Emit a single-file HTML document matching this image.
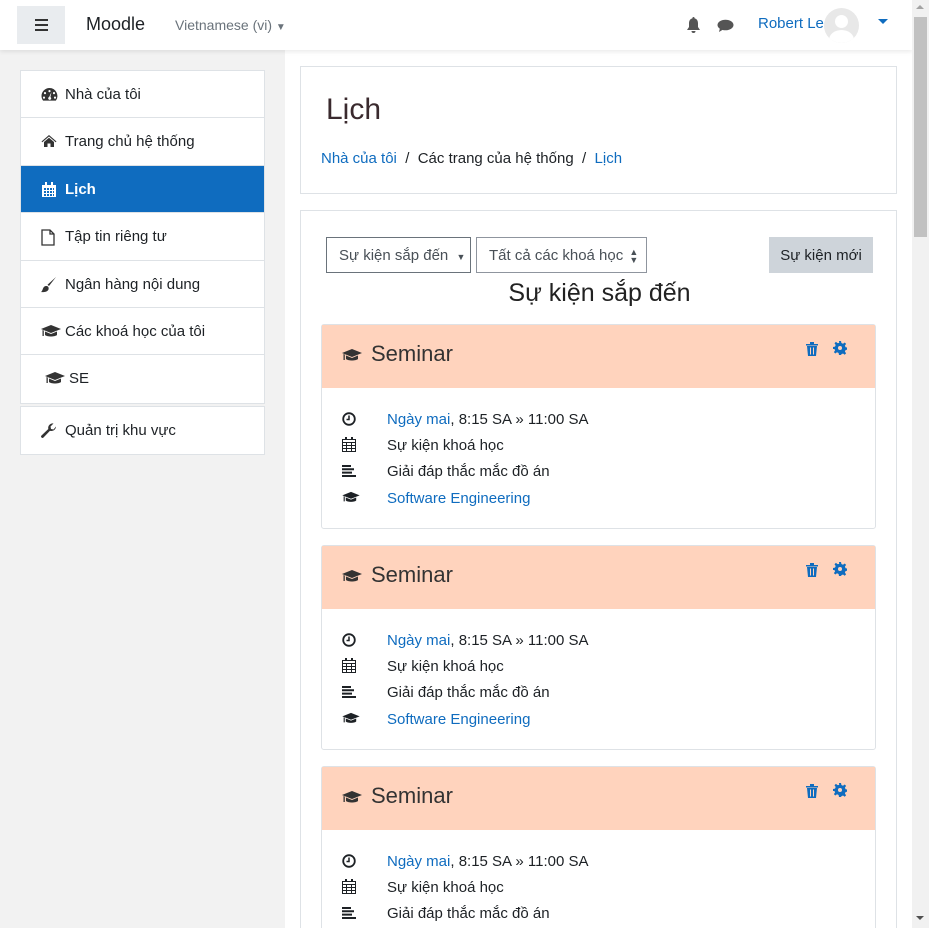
<!DOCTYPE html>
<html style="overflow:hidden;height:928px"><head><meta charset="utf-8"><style>
*{box-sizing:border-box;margin:0;padding:0}
html,body{overflow:hidden}
body{width:929px;height:928px;background:#f2f2f2;font-family:"Liberation Sans",sans-serif;font-size:15px;color:#1d2125;position:relative}
#wrap{position:absolute;left:0;top:0;width:929px;height:928px;overflow:hidden}
a{color:#0f6cbf;text-decoration:none}
.nav{position:absolute;left:0;top:0;width:912px;height:50px;background:#fff;box-shadow:0 2px 4px rgba(0,0,0,.08);z-index:2}
.burger{position:absolute;left:17px;top:6px;width:48px;height:38px;background:#e9ecef}
.burger i{position:absolute;left:18px;width:13px;height:2px;background:#333}
.abs{position:absolute}
.side{position:absolute;left:20px;width:245px;background:#fff;border:1px solid #dee2e6}
.side div{height:47.4px;border-bottom:1px solid #dee2e6;position:relative;line-height:48px;padding-left:44px;color:#1d2125}
.side div:last-child{border-bottom:none}
.side div.act{background:#0f6cbf;color:#fff;font-weight:bold}
.side svg{position:absolute;left:20px;top:16px}
.main{position:absolute;left:285px;top:50px;width:627px;height:878px;background:#fff}
.card{position:absolute;background:#fff;border:1px solid #dee2e6}
.ev{position:absolute;left:321px;width:555px;height:205px;border:1px solid #dee2e6;border-radius:3px;background:#fff}
.ev .hd{height:63px;background:#ffd3bd;position:relative}
.ev .hd span{position:absolute;left:49px;top:16px;font-size:22px;font-weight:300;color:#333}
.row{position:absolute;left:65px;font-size:15px}
.ic{position:absolute;left:20px}
.sb{position:absolute;left:912px;top:0;width:17px;height:928px;background:#f1f1f1;z-index:5}
</style></head><body><div id="wrap">
<div class="nav">
 <div class="burger"><i style="top:13px"></i><i style="top:18px"></i><i style="top:23px"></i></div>
 <div class="abs" style="left:86px;top:14px;font-size:18px;color:#1d2125">Moodle</div>
 <div class="abs" style="left:175px;top:17px;font-size:14px;color:#6a737b">Vietnamese (vi) <span style="font-size:10px">▼</span></div>
 <svg class="abs" style="left:686px;top:17px" width="15" height="16" viewBox="0 0 15 16"><path d="M7.5 0a1 1 0 0 1 1 1.3C11 2 12 4 12 6.5V10l2 3H1l2-3V6.5C3 4 4 2 6.5 1.3A1 1 0 0 1 7.5 0zM5.5 14h4a2 2 0 0 1-4 0z" fill="#555"/></svg>
 <svg class="abs" style="left:717px;top:19px" width="17" height="14" viewBox="0 0 17 14"><ellipse cx="8.5" cy="6" rx="8" ry="5.3" fill="#555"/><path d="M3 9l-1 4 5-3z" fill="#555"/></svg>
 <a class="abs" style="left:758px;top:15px;font-size:15px">Robert Le</a>
 <div class="abs" style="left:824px;top:8px;width:35px;height:35px;border-radius:50%;background:#e8e8e8;overflow:hidden"><div class="abs" style="left:11px;top:7px;width:13px;height:13px;border-radius:50%;background:#fff"></div><div class="abs" style="left:5px;top:22px;width:25px;height:20px;border-radius:50%;background:#fff"></div></div>
 <div class="abs" style="left:878px;top:19px;width:0;height:0;border-left:5px solid transparent;border-right:5px solid transparent;border-top:5px solid #0f6cbf"></div>
</div>

<div class="side" style="top:70px">
 <div><svg width="17" height="14" viewBox="0 0 17 14"><path d="M8.5 1a8 8 0 0 0-8 8c0 1.8.6 3.4 1.6 4.6h12.8A8 8 0 0 0 8.5 1zm0 2a1.1 1.1 0 1 1 0 2.2 1.1 1.1 0 0 1 0-2.2zM4 5a1.1 1.1 0 1 1 0 2.2A1.1 1.1 0 0 1 4 5zm9 0a1.1 1.1 0 1 1 0 2.2A1.1 1.1 0 0 1 13 5zM3 9.5a1.1 1.1 0 1 1 0 2.2 1.1 1.1 0 0 1 0-2.2zm11 0a1.1 1.1 0 1 1 0 2.2 1.1 1.1 0 0 1 0-2.2zM10.5 5L9.4 10a1.5 1.5 0 1 1-1.2-.1z" fill="#333"/></svg>Nhà của tôi</div>
 <div><svg width="16" height="14" viewBox="0 0 16 14"><path d="M8 1l7.5 6.5-.8.8L8 2.5 1.3 8.3l-.8-.8zM3 8l5-4.3L13 8v5H9.5V9.5h-3V13H3z" fill="#333"/></svg>Trang chủ hệ thống</div>
 <div class="act"><svg width="16" height="16" viewBox="0 0 16 16"><path d="M1 3h14v12H1z" fill="#fff"/><path d="M3 6h2v2H3zm3 0h2v2H6zm3 0h2v2H9zm3 0h1v2h-1zM3 9h2v2H3zm3 0h2v2H6zm3 0h2v2H9zm3 0h1v2h-1zM3 12h2v2H3zm3 0h2v2H6zm3 0h2v2H9zm3 0h1v2h-1z" fill="#0f6cbf"/><path d="M4 0h2v4H4zm6 0h2v4h-2z" fill="#fff"/></svg>Lịch</div>
 <div><svg width="14" height="17" viewBox="0 0 14 17"><path d="M1 1h8l4 4v11H1z M9 1v4h4" fill="none" stroke="#333" stroke-width="1.3"/></svg>Tập tin riêng tư</div>
 <div><svg width="16" height="16" viewBox="0 0 16 16"><path d="M15 0L8 9l-1.5-1.2zM5.5 9c2 0 2.5 2 2 3.5C6.5 15 2 15.5 0 15c1.5-1 1.5-3 2.5-4.5S4.5 9 5.5 9z" fill="#333"/></svg>Ngân hàng nội dung</div>
 <div><svg width="20" height="15" viewBox="0 0 20 15"><path d="M10 1L0 5l10 4 10-4zM4 7.5v3.5c2 2 10 2 12 0V7.5l-6 2.5zM1.5 6v6h1.3V6.5z" fill="#333"/></svg>Các khoá học của tôi</div>
 <div style="padding-left:48px"><svg style="left:24px" width="20" height="15" viewBox="0 0 20 15"><path d="M10 1L0 5l10 4 10-4zM4 7.5v3.5c2 2 10 2 12 0V7.5l-6 2.5zM1.5 6v6h1.3V6.5z" fill="#333"/></svg>SE</div>
</div>
<div class="side" style="top:406px;height:49px">
 <div style="height:47px"><svg width="16" height="16" viewBox="0 0 16 16"><path d="M15 3.5a4.5 4.5 0 0 1-6 4.2L2.5 14.5a1.4 1.4 0 0 1-2-2L7.3 6A4.5 4.5 0 0 1 12.5.5l-3 3 .5 2.5 2.5.5z" fill="#333"/></svg>Quản trị khu vực</div>
</div>

<div class="main"></div>
<div class="card" style="left:300px;top:66px;width:597px;height:128px">
 <div class="abs" style="left:25px;top:26px;font-size:30px;font-weight:300;color:#3a2a2e">Lịch</div>
 <div class="abs" style="left:20px;top:83px;font-size:15px"><a>Nhà của tôi</a>&nbsp; / &nbsp;Các trang của hệ thống&nbsp; / &nbsp;<a>Lịch</a></div>
</div>
<div class="card" style="left:300px;top:210px;width:597px;height:718px;border-bottom:none">
 <div class="abs" style="left:25px;top:26px;width:145px;height:36px;border:1px solid #6a737b;line-height:35px;padding-left:12px;font-size:15px;color:#495057">Sự kiện sắp đến <span style="font-size:9px;margin-left:4px">▼</span></div>
 <div class="abs" style="left:175px;top:26px;width:171px;height:36px;border:1px solid #8f959e;line-height:35px;padding-left:12px;font-size:15px;color:#495057">Tất cả các khoá học <span style="font-size:9px;margin-left:2px;line-height:8px;display:inline-block;vertical-align:middle;width:8px">▲<br>▼</span></div>
 <div class="abs" style="left:468px;top:26px;width:104px;height:36px;background:#ced4da;line-height:37px;text-align:center;font-size:15px;color:#1d2125">Sự kiện mới</div>
 <div class="abs" style="left:0;top:68px;width:597px;text-align:center;font-size:25px;font-weight:300;color:#222">Sự kiện sắp đến</div>
</div>

<div class="ev" style="top:324px"><div class="hd"><svg class="abs" style="left:20px;top:23px" width="20" height="15" viewBox="0 0 20 15"><path d="M10 1L0 5l10 4 10-4zM4 7.5v3.5c2 2 10 2 12 0V7.5l-6 2.5zM1.5 6v6h1.3V6.5z" fill="#333"/></svg><span>Seminar</span><svg class="abs" style="left:484px;top:17px" width="12" height="14" viewBox="0 0 12 14"><path d="M0 2h12v1.5H0zM4 0h4v2H4zM1 4h10l-1 10H2zm3 1.5v7h1v-7zm3 0v7h1v-7z" fill="#0f6cbf"/></svg><svg class="abs" style="left:511px;top:16px" width="14" height="14" viewBox="0 0 14 14"><path d="M6 0h2l.4 2 1.6.7 1.7-1.2 1.4 1.4-1.2 1.7.7 1.6 2 .4v2l-2 .4-.7 1.6 1.2 1.7-1.4 1.4-1.7-1.2-1.6.7L8 14H6l-.4-2-1.6-.7-1.7 1.2-1.4-1.4 1.2-1.7L1.4 8 0 8V6l2-.4.7-1.6-1.2-1.7 1.4-1.4 1.7 1.2L6.2 2z" fill="#0f6cbf"/><circle cx="7" cy="7" r="2" fill="#ffd3bd"/></svg></div>
<svg class="ic" style="top:87px" width="14" height="14" viewBox="0 0 14 14"><circle cx="7" cy="7" r="5.8" fill="none" stroke="#1d2125" stroke-width="1.8"/><path d="M7 3.5V7.5H4.5" fill="none" stroke="#1d2125" stroke-width="1.5"/></svg><div class="row" style="top:86px"><a>Ngày mai</a>, 8:15 SA » 11:00 SA</div>
<svg class="ic" style="top:112px" width="14" height="15" viewBox="0 0 14 15"><path d="M.5 2.5h13v12H.5zM.5 5.5h13M4.5 5.5v9M9.5 5.5v9M.5 8.5h13M.5 11.5h13" fill="none" stroke="#1d2125"/><path d="M3 0h2v3H3zm6 0h2v3H9z" fill="#1d2125"/></svg><div class="row" style="top:112px">Sự kiện khoá học</div>
<svg class="ic" style="top:140px" width="14" height="12" viewBox="0 0 14 12"><path d="M0 0h9v2H0zm0 3.3h12v2H0zm0 3.3h10v2H0zm0 3.4h14v2H0z" fill="#1d2125"/></svg><div class="row" style="top:138px">Giải đáp thắc mắc đồ án</div>
<svg class="ic" style="top:166px" width="18" height="13" viewBox="0 0 20 15"><path d="M10 1L0 5l10 4 10-4zM4 7.5v3.5c2 2 10 2 12 0V7.5l-6 2.5zM1.5 6v6h1.3V6.5z" fill="#1d2125"/></svg><div class="row" style="top:165px"><a>Software Engineering</a></div>
</div>

<div class="ev" style="top:545px"><div class="hd"><svg class="abs" style="left:20px;top:23px" width="20" height="15" viewBox="0 0 20 15"><path d="M10 1L0 5l10 4 10-4zM4 7.5v3.5c2 2 10 2 12 0V7.5l-6 2.5zM1.5 6v6h1.3V6.5z" fill="#333"/></svg><span>Seminar</span><svg class="abs" style="left:484px;top:17px" width="12" height="14" viewBox="0 0 12 14"><path d="M0 2h12v1.5H0zM4 0h4v2H4zM1 4h10l-1 10H2zm3 1.5v7h1v-7zm3 0v7h1v-7z" fill="#0f6cbf"/></svg><svg class="abs" style="left:511px;top:16px" width="14" height="14" viewBox="0 0 14 14"><path d="M6 0h2l.4 2 1.6.7 1.7-1.2 1.4 1.4-1.2 1.7.7 1.6 2 .4v2l-2 .4-.7 1.6 1.2 1.7-1.4 1.4-1.7-1.2-1.6.7L8 14H6l-.4-2-1.6-.7-1.7 1.2-1.4-1.4 1.2-1.7L1.4 8 0 8V6l2-.4.7-1.6-1.2-1.7 1.4-1.4 1.7 1.2L6.2 2z" fill="#0f6cbf"/><circle cx="7" cy="7" r="2" fill="#ffd3bd"/></svg></div>
<svg class="ic" style="top:87px" width="14" height="14" viewBox="0 0 14 14"><circle cx="7" cy="7" r="5.8" fill="none" stroke="#1d2125" stroke-width="1.8"/><path d="M7 3.5V7.5H4.5" fill="none" stroke="#1d2125" stroke-width="1.5"/></svg><div class="row" style="top:86px"><a>Ngày mai</a>, 8:15 SA » 11:00 SA</div>
<svg class="ic" style="top:112px" width="14" height="15" viewBox="0 0 14 15"><path d="M.5 2.5h13v12H.5zM.5 5.5h13M4.5 5.5v9M9.5 5.5v9M.5 8.5h13M.5 11.5h13" fill="none" stroke="#1d2125"/><path d="M3 0h2v3H3zm6 0h2v3H9z" fill="#1d2125"/></svg><div class="row" style="top:112px">Sự kiện khoá học</div>
<svg class="ic" style="top:140px" width="14" height="12" viewBox="0 0 14 12"><path d="M0 0h9v2H0zm0 3.3h12v2H0zm0 3.3h10v2H0zm0 3.4h14v2H0z" fill="#1d2125"/></svg><div class="row" style="top:138px">Giải đáp thắc mắc đồ án</div>
<svg class="ic" style="top:166px" width="18" height="13" viewBox="0 0 20 15"><path d="M10 1L0 5l10 4 10-4zM4 7.5v3.5c2 2 10 2 12 0V7.5l-6 2.5zM1.5 6v6h1.3V6.5z" fill="#1d2125"/></svg><div class="row" style="top:165px"><a>Software Engineering</a></div>
</div>

<div class="ev" style="top:766px"><div class="hd"><svg class="abs" style="left:20px;top:23px" width="20" height="15" viewBox="0 0 20 15"><path d="M10 1L0 5l10 4 10-4zM4 7.5v3.5c2 2 10 2 12 0V7.5l-6 2.5zM1.5 6v6h1.3V6.5z" fill="#333"/></svg><span>Seminar</span><svg class="abs" style="left:484px;top:17px" width="12" height="14" viewBox="0 0 12 14"><path d="M0 2h12v1.5H0zM4 0h4v2H4zM1 4h10l-1 10H2zm3 1.5v7h1v-7zm3 0v7h1v-7z" fill="#0f6cbf"/></svg><svg class="abs" style="left:511px;top:16px" width="14" height="14" viewBox="0 0 14 14"><path d="M6 0h2l.4 2 1.6.7 1.7-1.2 1.4 1.4-1.2 1.7.7 1.6 2 .4v2l-2 .4-.7 1.6 1.2 1.7-1.4 1.4-1.7-1.2-1.6.7L8 14H6l-.4-2-1.6-.7-1.7 1.2-1.4-1.4 1.2-1.7L1.4 8 0 8V6l2-.4.7-1.6-1.2-1.7 1.4-1.4 1.7 1.2L6.2 2z" fill="#0f6cbf"/><circle cx="7" cy="7" r="2" fill="#ffd3bd"/></svg></div>
<svg class="ic" style="top:87px" width="14" height="14" viewBox="0 0 14 14"><circle cx="7" cy="7" r="5.8" fill="none" stroke="#1d2125" stroke-width="1.8"/><path d="M7 3.5V7.5H4.5" fill="none" stroke="#1d2125" stroke-width="1.5"/></svg><div class="row" style="top:86px"><a>Ngày mai</a>, 8:15 SA » 11:00 SA</div>
<svg class="ic" style="top:112px" width="14" height="15" viewBox="0 0 14 15"><path d="M.5 2.5h13v12H.5zM.5 5.5h13M4.5 5.5v9M9.5 5.5v9M.5 8.5h13M.5 11.5h13" fill="none" stroke="#1d2125"/><path d="M3 0h2v3H3zm6 0h2v3H9z" fill="#1d2125"/></svg><div class="row" style="top:112px">Sự kiện khoá học</div>
<svg class="ic" style="top:140px" width="14" height="12" viewBox="0 0 14 12"><path d="M0 0h9v2H0zm0 3.3h12v2H0zm0 3.3h10v2H0zm0 3.4h14v2H0z" fill="#1d2125"/></svg><div class="row" style="top:138px">Giải đáp thắc mắc đồ án</div>
</div>

<div class="sb">
 <div class="abs" style="left:4px;top:5px;width:0;height:0;border-left:4px solid transparent;border-right:4px solid transparent;border-bottom:4px solid #a3a3a3"></div>
 <div class="abs" style="left:2px;top:17px;width:13px;height:220px;background:#c1c1c1"></div>
 <div class="abs" style="left:4px;top:916px;width:0;height:0;border-left:4px solid transparent;border-right:4px solid transparent;border-top:4px solid #505050"></div>
</div>
</div></body></html>
